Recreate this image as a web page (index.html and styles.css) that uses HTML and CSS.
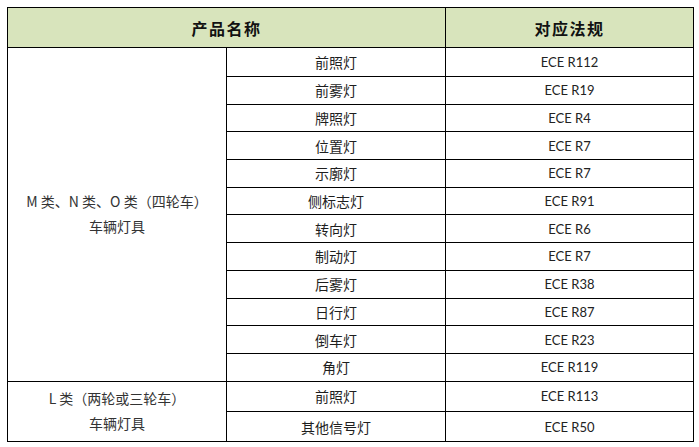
FILE: index.html
```html
<!DOCTYPE html>
<html lang="zh">
<head>
<meta charset="utf-8">
<link rel="stylesheet" href="styles.css">
</head>
<body>
<table class="reg">
  <colgroup><col class="c1"><col class="c2"><col class="c3"></colgroup>
  <thead>
    <tr class="head"><th colspan="2">产品名称</th><th>对应法规</th></tr>
  </thead>
  <tbody>
    <tr class="r first"><td rowspan="12" class="grp">M 类、N 类、O 类（四轮车）<br>车辆灯具</td><td>前照灯</td><td class="law">ECE R112</td></tr>
    <tr class="r"><td>前雾灯</td><td class="law">ECE R19</td></tr>
    <tr class="r"><td>牌照灯</td><td class="law">ECE R4</td></tr>
    <tr class="r"><td>位置灯</td><td class="law">ECE R7</td></tr>
    <tr class="r"><td>示廓灯</td><td class="law">ECE R7</td></tr>
    <tr class="r"><td>侧标志灯</td><td class="law">ECE R91</td></tr>
    <tr class="r"><td>转向灯</td><td class="law">ECE R6</td></tr>
    <tr class="r"><td>制动灯</td><td class="law">ECE R7</td></tr>
    <tr class="r"><td>后雾灯</td><td class="law">ECE R38</td></tr>
    <tr class="r"><td>日行灯</td><td class="law">ECE R87</td></tr>
    <tr class="r"><td>倒车灯</td><td class="law">ECE R23</td></tr>
    <tr class="r"><td>角灯</td><td class="law">ECE R119</td></tr>
    <tr class="r tall"><td rowspan="2" class="grp">L 类（两轮或三轮车）<br>车辆灯具</td><td>前照灯</td><td class="law">ECE R113</td></tr>
    <tr class="r tall"><td>其他信号灯</td><td class="law">ECE R50</td></tr>
  </tbody>
</table>
</body>
</html>
```
FILE: styles.css
```css
html, body {
  margin: 0;
  padding: 0;
  background: #ffffff;
}
body {
  padding: 7px 0 0 7px;
  font-family: "Noto Sans CJK SC", "Noto Sans", sans-serif;
  color: #1e1e1e;
}
.reg {
  border-collapse: collapse;
  table-layout: fixed;
  width: 686px;
}
.c1 { width: 219px; }
.c2 { width: 219px; }
.c3 { width: 248px; }
.reg th, .reg td {
  border: 1px solid #000;
  padding: 0;
  text-align: center;
  vertical-align: middle;
}
.head th {
  height: 39px;
  background: #d8e4bc;
  font-size: 16px;
  font-weight: 700;
  letter-spacing: 1.5px;
  color: #111;
}
.r td {
  height: 26.7px;
  font-size: 14px;
  line-height: 18px;
}
.r.first td { height: 28px; }
.r.tall td { height: 29.3px; }
.r td.grp {
  font-size: 14px;
  line-height: 25px;
  color: #333;
}
.r td.law {
  font-family: "Lato", "Open Sans", sans-serif;
  font-size: 13px;
  color: #222;
}
```
